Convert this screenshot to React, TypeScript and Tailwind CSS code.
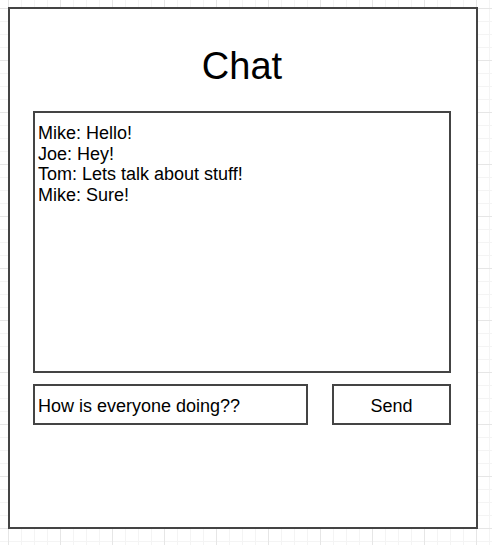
const MESSAGES = [
  "Mike: Hello!",
  "Joe: Hey!",
  "Tom: Lets talk about stuff!",
  "Mike: Sure!",
];

export default function App() {
  return (
    <div
      className="w-[492px] h-[545px] pl-[8px] pt-[7px] bg-white bg-[image:linear-gradient(to_right,#e6e6e6_1px,transparent_1px),linear-gradient(to_bottom,#e6e6e6_1px,transparent_1px),linear-gradient(to_right,#f4f4f4_1px,transparent_1px),linear-gradient(to_bottom,#f4f4f4_1px,transparent_1px)] bg-[length:52px_52px,52px_52px,13px_13px,13px_13px] bg-[position:8px_8px] text-black"
      style={{ fontFamily: '"Liberation Sans", Arial, sans-serif' }}
    >
      {/* Chat window */}
      <div className="w-[470px] h-[522px] border-2 border-[#444] bg-white pt-[35px]">
        <h1 className="text-center text-[38px] leading-[44px] font-normal pr-[2px]">Chat</h1>

        <div className="pl-[23px]">
          {/* Message log */}
          <div className="mt-[23px] w-[418px] h-[262px] border-2 border-[#444] pt-[10px] pl-[3px] text-[18px] leading-[20.5px]">
            {MESSAGES.map((m) => (
              <div key={m}>{m}</div>
            ))}
          </div>

          {/* Compose row */}
          <div className="mt-[11px] flex gap-[24px]">
            <div className="w-[275px] h-[41px] border-2 border-[#444] flex items-center pl-[3px] pt-[3px] text-[18px]">
              How is everyone doing??
            </div>
            <button className="w-[119px] h-[41px] border-2 border-[#444] flex items-center justify-center pt-[3px] text-[18px] bg-white">
              Send
            </button>
          </div>
        </div>
      </div>
    </div>
  );
}
